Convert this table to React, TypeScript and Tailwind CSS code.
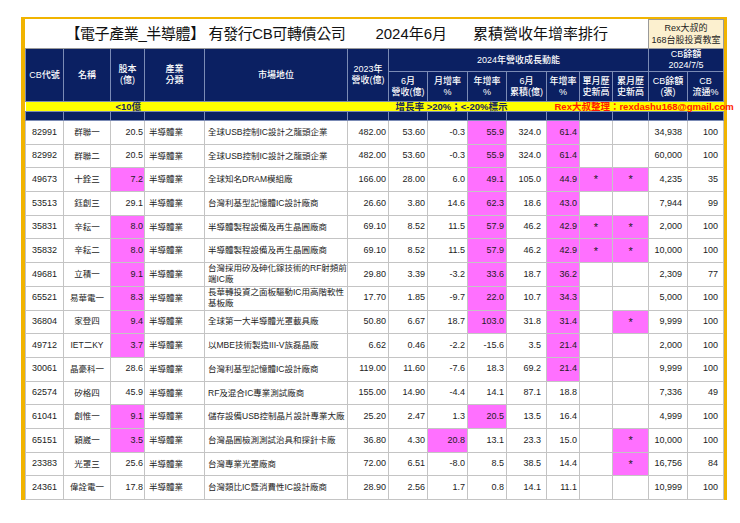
const widths = [38, 47, 34, 60, 143, 41, 39, 40, 39, 40, 33, 33, 36, 39, 36];

const align = [
  "text-center",
  "text-center",
  "text-right pr-[1px]",
  "text-left pl-[4px]",
  "text-left pl-[3px]",
  "text-right pr-[2px]",
  "text-right pr-[2px]",
  "text-right pr-[2px]",
  "text-right pr-[2px]",
  "text-right pr-[5px]",
  "text-right pr-[2px]",
  "text-center text-[11px]",
  "text-center text-[11px]",
  "text-right pr-[5px]",
  "text-right pr-[5px]",
];

type Row = { cells: string[]; pink: number[] };

const ind = "半導體業";

const rows: Row[] = [
  { cells: ["82991", "群聯一", "20.5", ind, "全球USB控制IC設計之龍頭企業", "482.00", "53.60", "-0.3", "55.9", "324.0", "61.4", "", "", "34,938", "100"], pink: [8, 10] },
  { cells: ["82992", "群聯二", "20.5", ind, "全球USB控制IC設計之龍頭企業", "482.00", "53.60", "-0.3", "55.9", "324.0", "61.4", "", "", "60,000", "100"], pink: [8, 10] },
  { cells: ["49673", "十銓三", "7.2", ind, "全球知名DRAM模組廠", "166.00", "28.00", "6.0", "49.1", "105.0", "44.9", "*", "*", "4,235", "35"], pink: [2, 8, 10, 11, 12] },
  { cells: ["53513", "鈺創三", "29.1", ind, "台灣利基型記憶體IC設計廠商", "26.60", "3.80", "14.6", "62.3", "18.6", "43.0", "", "", "7,944", "99"], pink: [8, 10] },
  { cells: ["35831", "辛耘一", "8.0", ind, "半導體製程設備及再生晶圓廠商", "69.10", "8.52", "11.5", "57.9", "46.2", "42.9", "*", "*", "2,000", "100"], pink: [2, 8, 10, 11, 12] },
  { cells: ["35832", "辛耘二", "8.0", ind, "半導體製程設備及再生晶圓廠商", "69.10", "8.52", "11.5", "57.9", "46.2", "42.9", "*", "*", "10,000", "100"], pink: [2, 8, 10, 11, 12] },
  { cells: ["49681", "立積一", "9.1", ind, "台灣採用矽及砷化鎵技術的RF射頻前|端IC廠", "29.80", "3.39", "-3.2", "33.6", "18.7", "36.2", "", "", "2,309", "77"], pink: [2, 8, 10] },
  { cells: ["65521", "易華電一", "8.3", ind, "長華轉投資之面板驅動IC用高階軟性|基板廠", "17.70", "1.85", "-9.7", "22.0", "10.7", "34.3", "", "", "5,000", "100"], pink: [2, 8, 10] },
  { cells: ["36804", "家登四", "9.4", ind, "全球第一大半導體光罩載具廠", "50.80", "6.67", "18.7", "103.0", "31.8", "31.4", "", "*", "9,999", "100"], pink: [2, 8, 10, 12] },
  { cells: ["49712", "IET二KY", "3.7", ind, "以MBE技術製造III-V族磊晶廠", "6.62", "0.46", "-2.2", "-15.6", "3.5", "21.4", "", "", "2,000", "100"], pink: [2, 10] },
  { cells: ["30061", "晶豪科一", "28.6", ind, "台灣利基型記憶體IC設計廠商", "119.00", "11.60", "-7.6", "18.3", "69.2", "21.4", "", "", "9,999", "100"], pink: [10] },
  { cells: ["62574", "矽格四", "45.9", ind, "RF及混合IC專業測試廠商", "155.00", "14.90", "-4.4", "14.1", "87.1", "18.8", "", "", "7,336", "49"], pink: [] },
  { cells: ["61041", "創惟一", "9.1", ind, "儲存設備USB控制晶片設計專業大廠", "25.20", "2.47", "1.3", "20.5", "13.5", "16.4", "", "", "4,999", "100"], pink: [2, 8] },
  { cells: ["65151", "穎崴一", "3.5", ind, "台灣晶圓檢測測試治具和探針卡廠", "36.80", "4.30", "20.8", "13.1", "23.3", "15.0", "", "*", "10,000", "100"], pink: [2, 7, 12] },
  { cells: ["23383", "光罩三", "25.6", ind, "台灣專業光罩廠商", "72.00", "6.51", "-8.0", "8.5", "38.5", "14.4", "", "*", "16,756", "84"], pink: [12] },
  { cells: ["24361", "偉詮電一", "17.8", ind, "台灣類比IC暨消費性IC設計廠商", "28.90", "2.56", "1.7", "0.8", "14.1", "11.1", "", "", "10,999", "100"], pink: [] },
];

const hd = "border border-[#7b8bb5] text-center align-middle font-medium leading-[11px]";

export default function App() {
  return (
    <div className="min-h-[523px] bg-white pl-[21px] pt-[17px] font-['Liberation_Sans','Noto_Sans_CJK_TC',sans-serif] text-[#1c1c1c]">
      <div className="w-[706px] border-x-4 border-t-2 border-[#f1b400]">
        <table className="w-[698px] table-fixed border-collapse text-[9px]">
          <colgroup>
            {widths.map((w, i) => (
              <col key={i} style={{ width: w }} />
            ))}
          </colgroup>
          <tbody>
            <tr className="h-[29px]">
              <td colSpan={13} className="border-b border-[#9a9a9a] bg-white text-center align-middle text-[15px] text-[#111]">
                <span className="tracking-[-0.4px]">【電子產業_半導體】 有發行CB可轉債公司</span>
                <span className="ml-[30px]">2024年6月</span>
                <span className="ml-[26px]">累積營收年增率排行</span>
              </td>
              <td colSpan={2} className="border border-[#9a9a9a] bg-[#fcf0cf] text-center align-middle text-[9px] leading-[12px] text-[#222]">
                Rex大叔的
                <br />
                168台股投資教室
              </td>
            </tr>
            <tr className="h-[22px] bg-[#0b2062] text-white">
              <td rowSpan={2} className={hd}>CB代號</td>
              <td rowSpan={2} className={hd}>名稱</td>
              <td rowSpan={2} className={hd}>股本<br />(億)</td>
              <td rowSpan={2} className={hd}>產業<br />分類</td>
              <td rowSpan={2} className={hd}>市場地位</td>
              <td rowSpan={2} className={hd}>2023年<br />營收(億)</td>
              <td colSpan={7} className={hd}>2024年營收成長動能</td>
              <td colSpan={2} className={hd}>CB餘額<br />2024/7/5</td>
            </tr>
            <tr className="h-[30px] bg-[#0b2062] text-white">
              <td className={hd}>6月<br />營收(億)</td>
              <td className={hd}>月增率<br />%</td>
              <td className={hd}>年增率<br />%</td>
              <td className={hd}>6月<br />累積(億)</td>
              <td className={hd}>年增率<br />%</td>
              <td className={hd}>單月歷<br />史新高</td>
              <td className={hd}>累月歷<br />史新高</td>
              <td className={hd}>CB餘額<br />(張)</td>
              <td className={hd}>CB<br />流通%</td>
            </tr>
            <tr className="h-[10px] bg-[#ffff00]">
              <td colSpan={15} className="border-y border-[#7b8bb5] p-0">
                <div className="grid h-[9px] grid-cols-[38px_47px_34px_60px_143px_41px_39px_40px_39px_40px_33px_33px_36px_39px_36px] whitespace-nowrap text-[9.5px] font-semibold leading-[9px]">
                  <span className="col-start-3 pl-[5px] text-[#1a2a5a]">&lt;10億</span>
                  <span className="col-start-7 pl-[7px] text-[#1a2a5a]">增長率 &gt;20%；&lt;-20%標示</span>
                  <span className="col-start-11 pl-[8px] text-[#ff1a00]">Rex大叔整理：rexdashu168@gmail.com</span>
                </div>
              </td>
            </tr>
            <tr className="h-[9px] bg-[#0b2062]">
              {widths.map((_, i) => (
                <td key={i} className="border border-[#7b8bb5] p-0" />
              ))}
            </tr>
            {rows.map((r) => (
              <tr key={r.cells[0]} className="h-[23.7px]">
                {r.cells.map((c, i) => (
                  <td
                    key={i}
                    className={`border border-[#c4c4c4] align-middle ${align[i]} ${r.pink.includes(i) ? "bg-[#ff70ff]" : "bg-white"} ${i === 3 || i === 4 || i === 1 ? "text-[8.5px]" : ""}`}
                  >
                    {c.includes("|") ? (
                      <span className="block leading-[11px] whitespace-nowrap">
                        {c.split("|")[0]}
                        <br />
                        {c.split("|")[1]}
                      </span>
                    ) : (
                      c
                    )}
                  </td>
                ))}
              </tr>
            ))}
          </tbody>
        </table>
      </div>
    </div>
  );
}
